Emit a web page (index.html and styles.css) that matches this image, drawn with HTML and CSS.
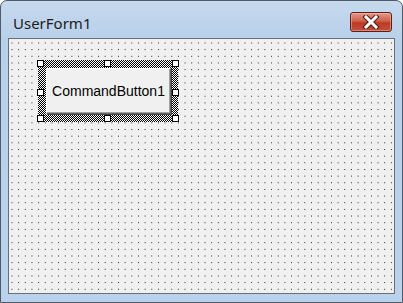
FILE: index.html
```html
<!DOCTYPE html>
<html>
<head>
<meta charset="utf-8">
<link rel="stylesheet" href="styles.css">
</head>
<body>
<div class="window">
  <div class="titlebar">
    <span class="title">UserForm1</span>
    <div class="close">
      <svg width="18" height="14" viewBox="0 0 18 14">
        <path d="M4 2 L14 12 M14 2 L4 12" stroke="#4a1a12" stroke-width="5" stroke-linecap="square" fill="none"/>
        <path d="M4 2 L14 12 M14 2 L4 12" stroke="#ffffff" stroke-width="3" stroke-linecap="square" fill="none"/>
      </svg>
    </div>
  </div>
  <div class="client">
    <div class="selection">
      <div class="button">CommandButton1</div>
      <span class="handle h-tl"></span>
      <span class="handle h-tm"></span>
      <span class="handle h-tr"></span>
      <span class="handle h-ml"></span>
      <span class="handle h-mr"></span>
      <span class="handle h-bl"></span>
      <span class="handle h-bm"></span>
      <span class="handle h-br"></span>
    </div>
  </div>
</div>
</body>
</html>
```

FILE: styles.css
```css
html, body {
  margin: 0;
  padding: 0;
  background: #ffffff;
}

.window {
  width: 403px;
  height: 303px;
  box-sizing: border-box;
  border: 1px solid #4f5a66;
  border-radius: 7px 7px 0 0;
  background: linear-gradient(#c6d9ee, #b8d0ea 40px, #bad2eb);
  padding: 0 7px 8px 7px;
  display: flex;
  flex-direction: column;
}

.titlebar {
  height: 37px;
  display: flex;
  justify-content: space-between;
  align-items: flex-start;
  flex: none;
}

.title {
  font-family: "Noto Sans", "Open Sans", sans-serif;
  font-size: 15px;
  color: #1b1b1b;
  margin-left: 5px;
  margin-top: 12px;
  line-height: 20px;
}

.close {
  width: 42px;
  height: 20px;
  box-sizing: border-box;
  margin-top: 11px;
  margin-right: 3px;
  border: 1px solid #5b1f16;
  border-radius: 3px;
  background: linear-gradient(#e09a88 0, #d0604c 45%, #bb3a24 55%, #c4503a 100%);
  box-shadow: inset 0 0 0 1px rgba(255, 200, 190, 0.45);
  display: flex;
  align-items: center;
  justify-content: center;
}

.close svg {
  display: block;
}

.client {
  flex: 1;
  border: 1px solid #6a6f76;
  background-color: #f0f0f0;
  background-image: conic-gradient(from 270deg at 1px 1px, #1a1a1a 25%, transparent 0);
  background-size: 6.6667px 6.6667px;
  background-position: 2.5px 3.5px;
  padding: 21px 0 0 29px;
}

.selection {
  position: relative;
  width: 140px;
  height: 62px;
  box-sizing: border-box;
  padding: 8px 7px 8px 8px;
  background-color: #ffffff;
  background-image: conic-gradient(#000 25%, #fff 0 50%, #000 0 75%, #fff 0);
  background-size: 2px 2px;
}

.button {
  height: 100%;
  box-sizing: border-box;
  background: #f0f0f0;
  border-top: 1px solid #ffffff;
  border-left: 1px solid #ffffff;
  border-right: 1px solid #6a6a6a;
  border-bottom: 1px solid #6a6a6a;
  box-shadow: inset -1px -1px 0 #a0a0a0, 1px 1px 0 #444;
  display: flex;
  align-items: center;
  justify-content: center;
  font-family: "Liberation Sans", Arial, sans-serif;
  font-size: 14px;
  color: #000;
}

.handle {
  position: absolute;
  width: 7px;
  height: 7px;
  box-sizing: border-box;
  border: 1px solid #000;
  background: #ffffff;
}

.h-tl { left: -1px; top: 0; }
.h-tm { left: 66px; top: 0; }
.h-tr { right: -1px; top: 0; }
.h-ml { left: -1px; top: 29px; }
.h-mr { right: -1px; top: 29px; }
.h-bl { left: -1px; bottom: 0; }
.h-bm { left: 66px; bottom: 0; }
.h-br { right: -1px; bottom: 0; }
```
